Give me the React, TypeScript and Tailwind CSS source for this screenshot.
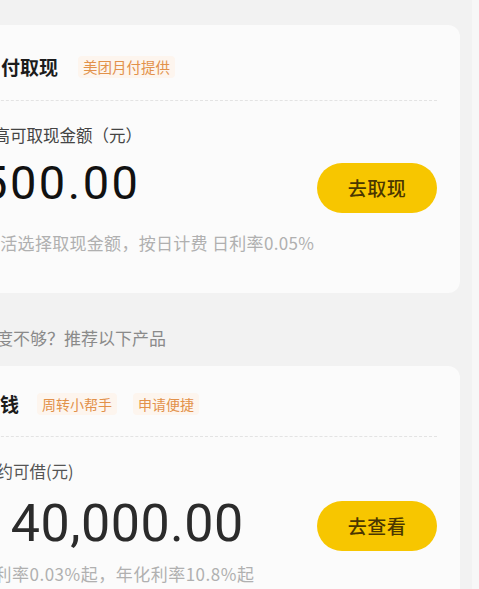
import React from "react";

// Cash-out card + recommended product card, cropped on the left like the reference.
const cjk = { fontFamily: '"Noto Sans CJK SC", "Noto Sans", sans-serif' };
const num = { fontFamily: 'Roboto, "Noto Sans", sans-serif' };

function Tag({ children, size = "text-[14px]" }: { children: React.ReactNode; size?: string }) {
  return (
    <span className={`px-[5px] py-[1px] rounded-[4px] bg-[#fdf5ee] ${size} leading-[20px] text-[#e2914a]`}>
      {children}
    </span>
  );
}

function YellowButton({ label }: { label: string }) {
  return (
    <button className="w-[120px] h-[50px] rounded-full bg-[#f7c600] text-[19px] font-medium text-[#4a3600] tracking-[0.5px]">
      {label}
    </button>
  );
}

export default function App() {
  return (
    <div className="w-[479px] h-[589px] bg-[#f2f2f2] overflow-hidden flex" style={cjk}>
      <div className="w-[472px] overflow-hidden">
        <div className="w-[500px] ml-[-40px] pt-[25px]">
          {/* card 1: 月付取现 */}
          <div className="h-[268px] rounded-[12px] bg-[#fbfbfb] pl-[21px] pr-[23px]">
            <div className="h-[75px] pt-[9px] flex items-center gap-[20px]">
              <span className="text-[19px] leading-[24px] font-bold text-[#1c1c1c] ml-[1px]">月付取现</span>
              <Tag size="text-[14.5px]">美团月付提供</Tag>
            </div>
            <div className="border-t border-dashed border-[#e3e3e3]" />
            <div className="mt-[22px] text-[16.5px] leading-[24px] text-[#444] ml-[-4px]">最高可取现金额（元）</div>
            <div className="mt-[16px] h-[50px] flex justify-between items-start">
              <span className="text-[47px] leading-[47px] mt-[-4px] ml-[0px] tracking-[2.5px] text-[#111]" style={num}>500.00</span>
              <YellowButton label="去取现" />
            </div>
            <div className="mt-[19px] text-[17px] leading-[22px] tracking-[0.3px] text-[#b0b0b0] ml-[2px]">
              灵活选择取现金额，按日计费 日利率0.05%
            </div>
          </div>

          <div className="mt-[33px] pl-[21px] text-[17px] leading-[24px] text-[#8a8a8a] ml-[-2px]">额度不够？推荐以下产品</div>

          {/* card 2: 借钱 */}
          <div className="mt-[16px] h-[260px] rounded-[12px] bg-[#fbfbfb] pl-[21px] pr-[23px]">
            <div className="h-[70px] pt-[6px] flex items-center gap-[17px]">
              <span className="text-[19px] leading-[24px] font-bold text-[#1c1c1c]">借钱</span>
              <div className="flex gap-[16px] ml-[1px]">
                <Tag>周转小帮手</Tag>
                <Tag>申请便捷</Tag>
              </div>
            </div>
            <div className="border-t border-dashed border-[#e3e3e3]" />
            <div className="mt-[22px] text-[16.5px] leading-[24px] text-[#555] ml-[-1px]">大约可借(元)</div>
            <div className="mt-[18px] h-[50px] flex justify-between items-start">
              <div className="flex items-baseline gap-[13px] mt-[-3px] ml-[1px] text-[#2b2b2b]" style={num}>
                <span className="text-[30px] leading-[52px]">¥</span>
                <span className="text-[52px] leading-[52px] tracking-[0.5px]">40,000.00</span>
              </div>
              <YellowButton label="去查看" />
            </div>
            <div className="mt-[12px] text-[17px] leading-[22px] tracking-[0.5px] text-[#b0b0b0] ml-[-4px]">
              日利率0.03%起，年化利率10.8%起
            </div>
          </div>
        </div>
      </div>
      <div className="flex-1 bg-[#f7f7f7]" />
    </div>
  );
}
